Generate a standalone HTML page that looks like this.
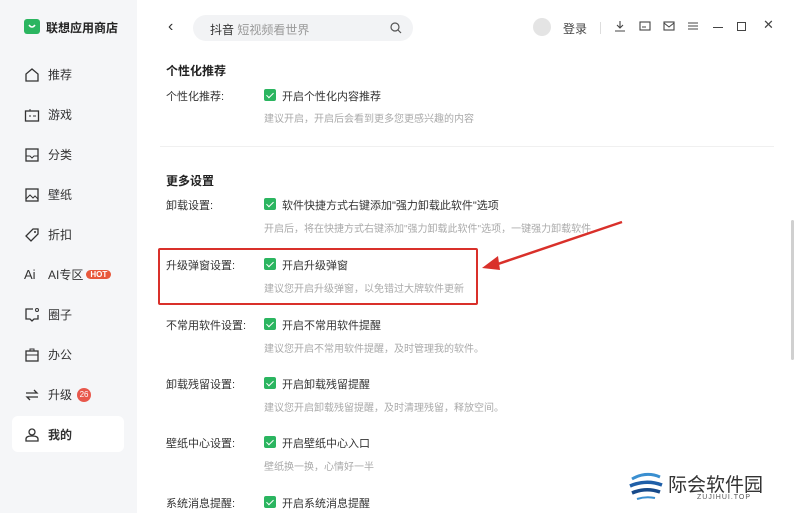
<!DOCTYPE html><html><head><meta charset="utf-8"><style>
*{margin:0;padding:0;box-sizing:border-box}
body{width:800px;height:513px;overflow:hidden;background:#fff;font-family:"Liberation Sans","Noto Sans CJK SC",sans-serif;position:relative;color:#333}
.sb{position:absolute;left:0;top:0;width:137px;height:513px;background:#f5f6f8}
.a{position:absolute;white-space:nowrap}
.nav{position:absolute;left:24px;font-size:12px;color:#333;display:flex;align-items:center;gap:8px}
.ic{width:16px;height:16px;display:inline-block}
.lbl{position:absolute;left:166px;font-size:11px;color:#333}
.cb{position:absolute;left:264px;width:12px;height:12px;background:#2bb560;border-radius:2px}
.cb:after{content:"";position:absolute;left:3.5px;top:1.5px;width:3px;height:6px;border:solid #fff;border-width:0 1.5px 1.5px 0;transform:rotate(45deg)}
.t{position:absolute;left:282px;font-size:11px;color:#333}
.d{position:absolute;left:264px;font-size:10px;color:#aaa}
.h{position:absolute;left:166px;font-size:12px;font-weight:bold;color:#222}
.tb{position:absolute;top:20px}
</style></head><body>
<div class="sb"></div>
<div class="a" style="left:24px;top:19px;width:16px;height:15px;background:#2bb560;border-radius:3px"></div>
<svg class="a" style="left:24px;top:19px" width="16" height="15"><path d="M5 6 Q8 10 11 6" stroke="#fff" stroke-width="1.5" fill="none"/></svg>
<div class="a" style="left:46px;top:19px;font-size:12px;font-weight:bold;color:#222">联想应用商店</div>

<div class="nav" style="top:66px"><svg class="ic"><path d="M2 14V7L8 2L14 7V14Z" stroke="#333" fill="none" stroke-width="1.3"/></svg>推荐</div>
<div class="nav" style="top:106px"><svg class="ic"><rect x="1.5" y="4" width="13" height="10" stroke="#333" fill="none" stroke-width="1.3"/><path d="M5 9h2M9 9h3M6 4V2" stroke="#333"/></svg>游戏</div>
<div class="nav" style="top:146px"><svg class="ic"><rect x="2" y="2" width="12" height="12" stroke="#333" fill="none" stroke-width="1.3"/><path d="M2 9h4l2 2 2-2h4" stroke="#333" fill="none"/></svg>分类</div>
<div class="nav" style="top:186px"><svg class="ic"><rect x="2" y="2" width="12" height="12" stroke="#333" fill="none" stroke-width="1.3"/><path d="M2 12l4-4 3 3 2-2 3 3" stroke="#333" fill="none"/></svg>壁纸</div>
<div class="nav" style="top:226px"><svg class="ic"><path d="M9 2h5v5l-7 7-5-5z" stroke="#333" fill="none" stroke-width="1.3"/><circle cx="11" cy="5" r="1" fill="#333"/></svg>折扣</div>
<div class="nav" style="top:266px"><span style="width:16px;font-size:13px">Ai</span>AI专区<span style="background:#e8583c;color:#fff;font-size:8px;font-weight:bold;border-radius:7px;padding:0 4px;margin-left:-5px">HOT</span></div>
<div class="nav" style="top:306px"><svg class="ic"><path d="M9 2H2v10h4l2 2 2-2h4V8" stroke="#333" fill="none" stroke-width="1.3"/><circle cx="13" cy="3" r="1.5" stroke="#333" fill="none"/></svg>圈子</div>
<div class="nav" style="top:346px"><svg class="ic"><rect x="2" y="4" width="12" height="10" stroke="#333" fill="none" stroke-width="1.3"/><path d="M6 4V2h4v2M2 8h12" stroke="#333" fill="none"/></svg>办公</div>
<div class="nav" style="top:386px"><svg class="ic"><path d="M2 6h11l-3-3M14 10H3l3 3" stroke="#333" fill="none" stroke-width="1.3"/></svg>升级<span style="background:#e8584c;color:#fff;font-size:8px;border-radius:7px;width:14px;height:14px;text-align:center;line-height:14px;margin-left:-3px">26</span></div>
<div class="a" style="left:12px;top:416px;width:112px;height:36px;background:#fff;border-radius:6px"></div>
<div class="nav" style="top:426px;font-weight:bold"><svg class="ic"><circle cx="8" cy="5" r="3" stroke="#333" fill="none" stroke-width="1.3"/><path d="M2 14v-2c0-2 2-3 6-3s6 1 6 3v2z" stroke="#333" fill="none" stroke-width="1.3"/></svg>我的</div>

<div class="a" style="left:168px;top:18px;font-size:16px;color:#333">‹</div>
<div class="a" style="left:193px;top:15px;width:220px;height:26px;background:#f2f3f5;border-radius:13px"></div>
<div class="a" style="left:210px;top:21px;font-size:12px;color:#333">抖音 <span style="color:#999">短视频看世界</span></div>
<svg class="a" style="left:390px;top:22px" width="12" height="12"><circle cx="5" cy="5" r="4" stroke="#555" fill="none" stroke-width="1.2"/><path d="M8 8l3 3" stroke="#555" stroke-width="1.2"/></svg>
<div class="a" style="left:533px;top:18px;width:18px;height:18px;border-radius:50%;background:#e4e4e4"></div>
<div class="a" style="left:563px;top:20px;font-size:12px;color:#444">登录</div>
<div class="a" style="left:600px;top:22px;width:1px;height:12px;background:#ddd"></div>
<svg class="tb" style="left:614px" width="12" height="12"><path d="M6 1v7M3 5l3 3 3-3M1 11h10" stroke="#444" fill="none" stroke-width="1.1"/></svg>
<svg class="tb" style="left:639px" width="12" height="12"><rect x="1" y="2" width="10" height="8" stroke="#444" fill="none" stroke-width="1.1"/><path d="M3 7h4" stroke="#444"/></svg>
<svg class="tb" style="left:663px" width="12" height="12"><rect x="1" y="2" width="10" height="8" stroke="#444" fill="none" stroke-width="1.1"/><path d="M1 3l5 4 5-4" stroke="#444" fill="none"/></svg>
<svg class="tb" style="left:687px" width="12" height="12"><path d="M1 3h10M1 6h10M1 9h10" stroke="#444" stroke-width="1.1"/></svg>
<div class="a" style="left:713px;top:27px;width:10px;height:1px;background:#444"></div>
<div class="a" style="left:737px;top:22px;width:9px;height:9px;border:1px solid #444"></div>
<div class="a" style="left:763px;top:17px;font-size:13px;color:#444">✕</div>

<div class="h" style="top:62px">个性化推荐</div>
<div class="lbl" style="top:88px">个性化推荐:</div><div class="cb" style="top:89px"></div><div class="t" style="top:88px">开启个性化内容推荐</div>
<div class="d" style="top:110px">建议开启，开启后会看到更多您更感兴趣的内容</div>
<div class="a" style="left:160px;top:146px;width:614px;height:1px;background:#f0f0f0"></div>
<div class="h" style="top:172px">更多设置</div>
<div class="lbl" style="top:197px">卸载设置:</div><div class="cb" style="top:198px"></div><div class="t" style="top:197px">软件快捷方式右键添加"强力卸载此软件"选项</div>
<div class="d" style="top:220px">开启后，将在快捷方式右键添加"强力卸载此软件"选项，一键强力卸载软件</div>
<div class="lbl" style="top:257px">升级弹窗设置:</div><div class="cb" style="top:258px"></div><div class="t" style="top:257px">开启升级弹窗</div>
<div class="d" style="top:280px">建议您开启升级弹窗，以免错过大牌软件更新</div>
<div class="lbl" style="top:317px">不常用软件设置:</div><div class="cb" style="top:318px"></div><div class="t" style="top:317px">开启不常用软件提醒</div>
<div class="d" style="top:340px">建议您开启不常用软件提醒，及时管理我的软件。</div>
<div class="lbl" style="top:376px">卸载残留设置:</div><div class="cb" style="top:377px"></div><div class="t" style="top:376px">开启卸载残留提醒</div>
<div class="d" style="top:399px">建议您开启卸载残留提醒，及时清理残留，释放空间。</div>
<div class="lbl" style="top:435px">壁纸中心设置:</div><div class="cb" style="top:436px"></div><div class="t" style="top:435px">开启壁纸中心入口</div>
<div class="d" style="top:458px">壁纸换一换，心情好一半</div>
<div class="lbl" style="top:495px">系统消息提醒:</div><div class="cb" style="top:496px"></div><div class="t" style="top:495px">开启系统消息提醒</div>

<div class="a" style="left:158px;top:248px;width:320px;height:57px;border:2px solid #d9302a;border-radius:2px"></div>
<svg class="a" style="left:470px;top:210px" width="160" height="70"><path d="M152 12L22 56" stroke="#d9302a" stroke-width="2.5"/><path d="M12 58L28 46L30 60Z" fill="#d9302a"/></svg>
<div class="a" style="left:791px;top:220px;width:3px;height:140px;background:#d0d0d0;border-radius:2px"></div>

<svg class="a" style="left:628px;top:467px" width="36" height="36"><path d="M4 12Q18 4 32 10" stroke="#3a8fd0" stroke-width="3" fill="none"/><path d="M2 19Q18 12 34 18" stroke="#1f5fa8" stroke-width="3.5" fill="none"/><path d="M4 26Q18 20 32 25" stroke="#174a8a" stroke-width="3.5" fill="none"/><path d="M9 32Q18 29 27 31" stroke="#3a8fd0" stroke-width="2" fill="none"/></svg>
<div class="a" style="left:668px;top:470px;font-size:19px;color:#333">际会软件园</div>
<div class="a" style="left:697px;top:494px;font-size:7px;color:#555;letter-spacing:1px">ZUJIHUI.TOP</div>
</body></html>
